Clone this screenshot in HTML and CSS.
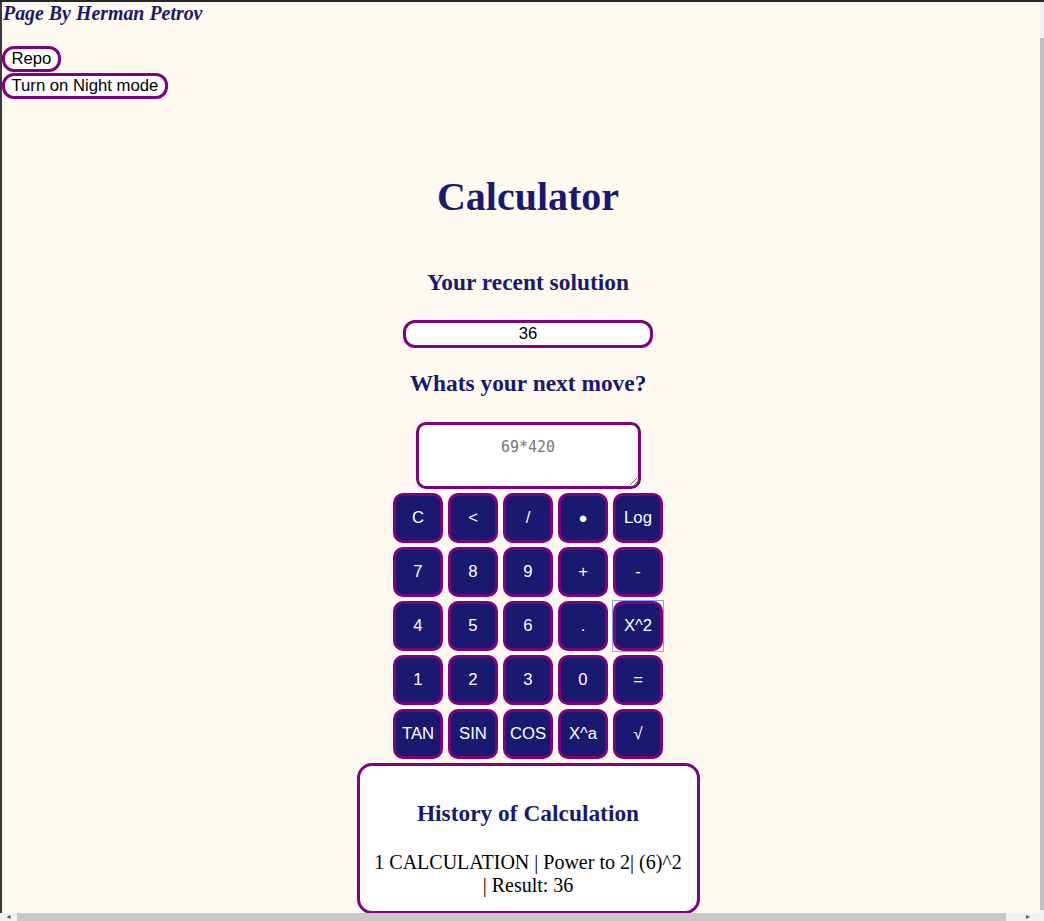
FILE: index.html
```html
<!DOCTYPE html>
<html lang="en">
<head>
<meta charset="utf-8">
<title>Calculator</title>
<link rel="stylesheet" href="styles.css">
</head>
<body>
<div class="window">
  <main class="page">
    <h3 class="author">Page By Herman Petrov</h3>
    <div class="links">
      <button class="link-btn">Repo</button>
      <button class="link-btn">Turn on Night mode</button>
    </div>
    <section class="calc">
      <h1 class="title">Calculator</h1>
      <h2 class="subtitle sub-recent">Your recent solution</h2>
      <input class="recent" type="text" value="36" readonly>
      <h2 class="subtitle sub-next">Whats your next move?</h2>
      <textarea class="expr" placeholder="69*420"></textarea>
      <div class="keys">
        <button class="key">C</button>
        <button class="key">&lt;</button>
        <button class="key">/</button>
        <button class="key"><span class="dot">●</span></button>
        <button class="key">Log</button>
        <button class="key">7</button>
        <button class="key">8</button>
        <button class="key">9</button>
        <button class="key">+</button>
        <button class="key">-</button>
        <button class="key">4</button>
        <button class="key">5</button>
        <button class="key">6</button>
        <button class="key">.</button>
        <button class="key key-focus">X^2</button>
        <button class="key">1</button>
        <button class="key">2</button>
        <button class="key">3</button>
        <button class="key">0</button>
        <button class="key">=</button>
        <button class="key">TAN</button>
        <button class="key">SIN</button>
        <button class="key">COS</button>
        <button class="key">X^a</button>
        <button class="key">√</button>
      </div>
      <div class="history">
        <h2 class="subtitle hist-title">History of Calculation</h2>
        <p class="hist-text">1 CALCULATION | Power to 2| (6)^2 | Result: 36</p>
      </div>
    </section>
  </main>
  <div class="vscroll"><div class="vthumb"></div></div>
  <div class="hscroll">
    <span class="arrow">&#9666;</span>
    <div class="hthumb"></div>
    <span class="arrow">&#9656;</span>
  </div>
  <div class="corner"></div>
</div>
</body>
</html>
```
FILE: styles.css
```css
html, body {
  margin: 0;
  padding: 0;
  background: #fffaf0;
}

.window {
  width: 1044px;
  height: 921px;
  box-sizing: border-box;
  border-top: 2px solid #26272b;
  display: grid;
  grid-template-columns: 1fr 4px;
  grid-template-rows: 1fr 8px;
  overflow: hidden;
}

.page {
  background: #fffaf0;
  border-left: 2px solid #3a3a3a;
  overflow: hidden;
  font-family: "Liberation Serif", "Times New Roman", serif;
}

.author {
  margin: 0;
  padding-left: 1px;
  font-size: 19.9px;
  line-height: 22px;
  font-weight: bold;
  font-style: italic;
  color: #191970;
}

.links {
  margin-top: 22px;
  display: flex;
  flex-direction: column;
  align-items: flex-start;
  gap: 1px;
}

.link-btn {
  font-family: "Liberation Sans", Arial, sans-serif;
  font-size: 16.7px;
  line-height: 18px;
  padding: 1px 6.5px;
  margin: 0;
  border: 3px solid #800080;
  border-radius: 12px;
  background: #ffffff;
  color: #000000;
}

.calc {
  padding-left: 14px;
  display: flex;
  flex-direction: column;
  align-items: center;
  text-align: center;
}

.title {
  margin: 75px 0 0;
  font-size: 40px;
  line-height: 46px;
  font-weight: bold;
  color: #191970;
}

.subtitle {
  margin: 0;
  font-size: 23.4px;
  line-height: 27px;
  font-weight: bold;
  color: #191970;
}

.sub-recent {
  margin-top: 49px;
}

.recent {
  margin-top: 24px;
  width: 250px;
  height: 28px;
  box-sizing: border-box;
  border: 3px solid #800080;
  border-radius: 12px;
  background: #ffffff;
  text-align: center;
  font-family: "Liberation Sans", Arial, sans-serif;
  font-size: 16.7px;
  color: #000000;
  padding: 0;
  outline: none;
}

.sub-next {
  margin-top: 22px;
}

.expr {
  margin-top: 25px;
  width: 225px;
  height: 67px;
  box-sizing: border-box;
  border: 3px solid #800080;
  border-radius: 10px;
  background: #ffffff;
  padding: 13px 4px 4px;
  text-align: center;
  font-family: "DejaVu Sans Mono", "Liberation Mono", monospace;
  font-size: 15px;
  color: #000000;
  display: block;
}

.expr::placeholder {
  color: #777777;
}

.keys {
  margin-top: 4px;
  display: grid;
  grid-template-columns: repeat(5, 50px);
  grid-auto-rows: 50px;
  column-gap: 5px;
  row-gap: 4px;
}

.key {
  margin: 0;
  padding: 0;
  box-sizing: border-box;
  border: 3px solid #800080;
  border-radius: 10px;
  background: #191970;
  color: #ffffff;
  font-family: "Liberation Sans", Arial, sans-serif;
  font-size: 16.7px;
}

.key-focus {
  position: relative;
}

.key-focus::after {
  content: "";
  position: absolute;
  top: -4px;
  left: -4px;
  right: -4px;
  bottom: -4px;
  border: 1px solid #7fa8f0;
  pointer-events: none;
}

.dot {
  font-size: 15px;
}

.history {
  margin-top: 4px;
  width: 343px;
  height: 151px;
  box-sizing: border-box;
  border: 3px solid #800080;
  border-radius: 15px;
  background: #ffffff;
  padding: 0 12px;
  flex-shrink: 0;
}

.hist-title {
  margin-top: 34px;
}

.hist-text {
  margin: 24px 0 0;
  font-size: 20px;
  line-height: 23px;
  color: #000000;
}

.vscroll {
  background: #f1f1f1;
  display: flex;
  flex-direction: column;
  padding-top: 36px;
  padding-bottom: 3px;
}

.vthumb {
  flex: 1;
  background: #c1c1c1;
}

.hscroll {
  background: #f1f1f1;
  display: flex;
  align-items: center;
}

.hthumb {
  flex: 1;
  height: 8px;
  background: #c8c8c8;
}

.arrow {
  width: 17px;
  text-align: center;
  font-size: 8px;
  line-height: 8px;
  color: #5a5a5a;
  font-family: "DejaVu Sans", sans-serif;
}

.arrow:last-child {
  width: 34px;
  text-align: right;
  padding-right: 10px;
  box-sizing: border-box;
}

.corner {
  background: #f1f1f1;
}
```
